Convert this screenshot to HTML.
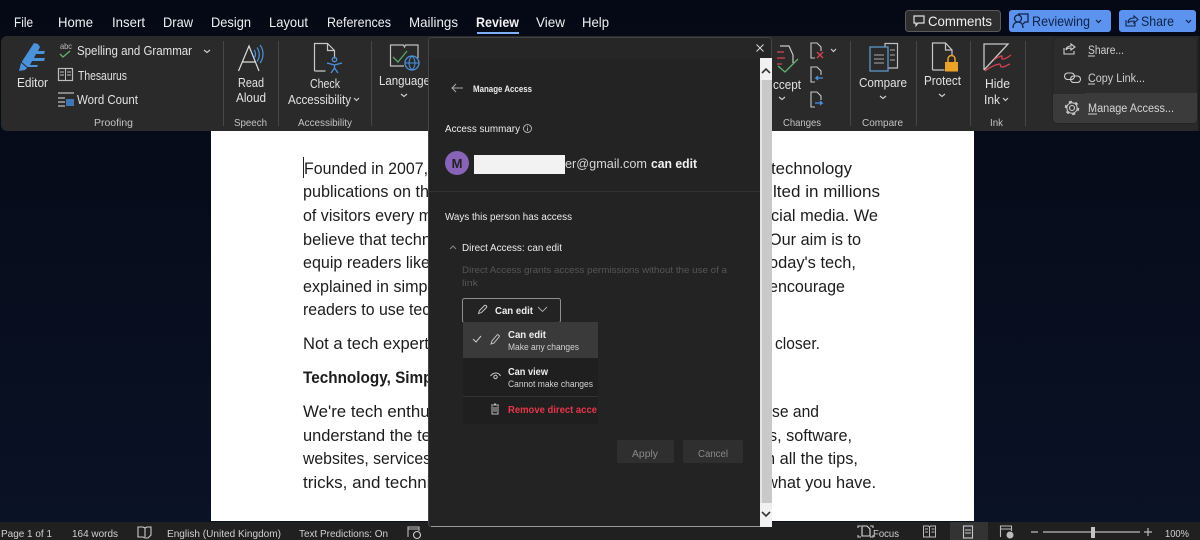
<!DOCTYPE html>
<html><head><meta charset="utf-8"><style>
html,body{margin:0;padding:0;background:#060b1a;width:1200px;height:540px;overflow:hidden}
svg{display:block;filter:blur(.3px)}
text{font-family:"Liberation Sans",sans-serif;white-space:pre}
.t{fill:#f0f0f0;font-size:14px}
.r{fill:#e2e2e2;font-size:12.5px}
.g{fill:#c4c4c4;font-size:10.5px}
.d{fill:#1c1c1c;font-size:17px}
.s{fill:#d0d0d0;font-size:10.5px}
.w{fill:#ededed;font-size:10px}
.b{font-weight:bold}
</style></head><body>
<svg width="1200" height="540" viewBox="0 0 1200 540" xmlns="http://www.w3.org/2000/svg">
<defs>
<clipPath id="cl"><rect x="211" y="131" width="218" height="390"/></clipPath>
<linearGradient id="bgg" x1="0" x2="0" y1="0" y2="1"><stop offset="0" stop-color="#050915"/><stop offset="1" stop-color="#0a1226"/></linearGradient>
</defs>
<rect width="1200" height="540" fill="url(#bgg)"/>

<!-- tabs -->
<g>
<text class="t" x="14" y="27" textLength="19" lengthAdjust="spacingAndGlyphs">File</text>
<text class="t" x="58" y="27" textLength="35" lengthAdjust="spacingAndGlyphs">Home</text>
<text class="t" x="112" y="27" textLength="33" lengthAdjust="spacingAndGlyphs">Insert</text>
<text class="t" x="163" y="27" textLength="30" lengthAdjust="spacingAndGlyphs">Draw</text>
<text class="t" x="211" y="27" textLength="40" lengthAdjust="spacingAndGlyphs">Design</text>
<text class="t" x="269" y="27" textLength="39" lengthAdjust="spacingAndGlyphs">Layout</text>
<text class="t" x="327" y="27" textLength="64" lengthAdjust="spacingAndGlyphs">References</text>
<text class="t" x="409" y="27" textLength="49" lengthAdjust="spacingAndGlyphs">Mailings</text>
<text class="t b" x="476" y="27" textLength="43" lengthAdjust="spacingAndGlyphs">Review</text>
<text class="t" x="536" y="27" textLength="29" lengthAdjust="spacingAndGlyphs">View</text>
<text class="t" x="582" y="27" textLength="27" lengthAdjust="spacingAndGlyphs">Help</text>
<rect x="477" y="32" width="42" height="2" fill="#7fb0f5"/>
</g>

<!-- top right buttons -->
<rect x="905.500" y="10.500" width="95" height="21" rx="3" fill="#2e2e2e" stroke="#5a5a5a"/>
<path d="M914 16h10v7h-6l-2 2.500v-2.500h-2z" fill="none" stroke="#e0e0e0" stroke-width="1.200"/>
<text x="928" y="26" fill="#eee" font-size="14" textLength="64" lengthAdjust="spacingAndGlyphs">Comments</text>
<rect x="1009" y="10" width="102" height="22" rx="3" fill="#5b93ee"/>
<path d="M1013 28c0-4 2-6 5-6s5 2 5 6M1018 22a3.500 3.500 0 1 0 0-7 3.500 3.500 0 0 0 0 7M1018 14h10v8h-3l-2 2" fill="none" stroke="#0f2347" stroke-width="1.300"/>
<text x="1032" y="26" fill="#0f2347" font-size="14" textLength="58" lengthAdjust="spacingAndGlyphs">Reviewing</text>
<path d="M1096 20l2.500 2.500 2.500-2.500" fill="none" stroke="#0f2347" stroke-width="1.200"/>
<rect x="1119" y="10" width="77" height="22" rx="3" fill="#5b93ee"/>
<path d="M1126 20v6h9v-3M1128 23c0-4 3-5 6-5v-2l4 3.500-4 3.500v-2c-2 0-4 0-6 2" fill="none" stroke="#0f2347" stroke-width="1.100"/>
<text x="1141" y="26" fill="#0f2347" font-size="14" textLength="33" lengthAdjust="spacingAndGlyphs">Share</text>
<path d="M1186 20l2.500 2.500 2.500-2.500" fill="none" stroke="#0f2347" stroke-width="1.200"/>

<!-- ribbon -->
<rect x="1" y="36" width="1205" height="95" rx="6" fill="#2a2a2a"/>
<g stroke="#474747" stroke-width="1">
<path d="M223.500 41v85M278.500 41v85M371.500 41v85M850.500 41v85M916.500 41v85M970.500 41v85M1025.500 41v85"/>
</g>

<!-- Editor -->
<path d="M19 71l2-8 13-20 4 1 2 3-2 4h7l-1 3H36l-2 4h11l-1 3H32l-2 4h8l-1 2H28l-3 3z" fill="#4a92dc"/>
<path d="M21 62l7 6" stroke="#2a2a2a" stroke-width="1"/>
<text class="r" x="17" y="87" textLength="31" lengthAdjust="spacingAndGlyphs">Editor</text>
<text x="60" y="49" fill="#bbb" font-size="8" textLength="12" lengthAdjust="spacingAndGlyphs">abc</text>
<path d="M60 54l3 3 7-6" fill="none" stroke="#5fb36c" stroke-width="1.300"/>
<text class="r" x="77" y="55" textLength="115" lengthAdjust="spacingAndGlyphs">Spelling and Grammar</text>
<path d="M204 50l3 2.500 3-2.500" fill="none" stroke="#ccc" stroke-width="1.200"/>
<rect x="58.500" y="68.500" width="14" height="12" fill="none" stroke="#bdbdbd" stroke-width="1.200"/>
<path d="M65.500 68.500v12M60 72h4M60 75h4M67 72h4M67 75h4" stroke="#bdbdbd"/>
<text class="r" x="78" y="80" textLength="49" lengthAdjust="spacingAndGlyphs">Thesaurus</text>
<path d="M58 93h16M58 98h7M58 102h7M58 106h7" stroke="#bdbdbd" stroke-width="1.200"/>
<rect x="66" y="99" width="8" height="7" fill="#3d77b5"/>
<text class="r" x="77" y="104" textLength="61" lengthAdjust="spacingAndGlyphs">Word Count</text>
<text class="g" x="94" y="126" textLength="39" lengthAdjust="spacingAndGlyphs">Proofing</text>

<!-- Read Aloud -->
<path d="M238.500 71L249 46l10 25M242 62h13.500" fill="none" stroke="#dcdcdc" stroke-width="1.200"/>
<path d="M254 50c2 2 2 6 0 8M257 47.500c3 4 3 10 0 14M260 45c4 5 4 13 0 18" fill="none" stroke="#4a92dc" stroke-width="1.200"/>
<text class="r" x="238" y="87" textLength="26" lengthAdjust="spacingAndGlyphs">Read</text>
<text class="r" x="236" y="102" textLength="30" lengthAdjust="spacingAndGlyphs">Aloud</text>
<text class="g" x="234" y="126" textLength="33" lengthAdjust="spacingAndGlyphs">Speech</text>

<!-- Check accessibility -->
<path d="M314.500 71V43.500h13l7 7v8M327.500 43.500v7h7M314.500 71h11" fill="none" stroke="#c8c8c8" stroke-width="1.200"/>
<circle cx="334.500" cy="59.500" r="2.200" fill="none" stroke="#4a92dc" stroke-width="1.300"/>
<path d="M327 63l7.500 2 7.500-2M334.500 65v3l-3.500 5M334.500 68l3.500 5" fill="none" stroke="#4a92dc" stroke-width="1.300"/>
<text class="r" x="310" y="88" textLength="30" lengthAdjust="spacingAndGlyphs">Check</text>
<text class="r" x="288" y="104" textLength="63" lengthAdjust="spacingAndGlyphs">Accessibility</text>
<path d="M354 98l2.500 2.500 2.500-2.500" fill="none" stroke="#ccc" stroke-width="1.200"/>
<text class="g" x="298" y="126" textLength="54" lengthAdjust="spacingAndGlyphs">Accessibility</text>

<!-- Language -->
<path d="M404 66h-13.500V45h13l1 2 1-2h12.500v13" fill="none" stroke="#c0c0c0" stroke-width="1.200"/>
<path d="M393 57l5 5 9-11" fill="none" stroke="#58a868" stroke-width="1.300"/>
<circle cx="412" cy="63" r="7" fill="#2a2a2a" stroke="#4a92dc" stroke-width="1.300"/>
<path d="M405 63h14M412 56c-4 4-4 10 0 14M412 56c4 4 4 10 0 14" fill="none" stroke="#4a92dc"/>
<text class="r" x="379" y="85" textLength="51" lengthAdjust="spacingAndGlyphs">Language</text>
<path d="M401 94l3 2.500 3-2.500" fill="none" stroke="#ccc" stroke-width="1.200"/>

<!-- Changes -->
<path d="M780 46h9l4 9v8" fill="none" stroke="#c8c8c8" stroke-width="1.200"/>
<path d="M777 52h7M777 58h8M777 64h5" stroke="#d34550" stroke-width="1.300"/>
<path d="M778 66l7 6 13-13" fill="none" stroke="#5fb36c" stroke-width="1.300"/>
<text class="r" x="773" y="89" textLength="28" lengthAdjust="spacingAndGlyphs">ccept</text>
<path d="M779 97l3 2.500 3-2.500" fill="none" stroke="#ccc" stroke-width="1.200"/>
<path d="M815 58h-4V43h6l4 4v4" fill="none" stroke="#c8c8c8" stroke-width="1.100"/>
<path d="M817 52l6 6M823 52l-6 6" stroke="#d34550" stroke-width="1.300"/>
<path d="M831 49l2.500 2.500 2.500-2.500" fill="none" stroke="#ccc" stroke-width="1.200"/>
<path d="M815 82h-4V67h6l4 4v4" fill="none" stroke="#c8c8c8" stroke-width="1.100"/>
<path d="M823 78h-7l2-2M816 78l2 2" fill="none" stroke="#4a92dc" stroke-width="1.300"/>
<path d="M815 107h-4V92h6l4 4v4" fill="none" stroke="#c8c8c8" stroke-width="1.100"/>
<path d="M815 103h7l-2-2M822 103l-2 2" fill="none" stroke="#4a92dc" stroke-width="1.300"/>
<text class="g" x="783" y="126" textLength="38" lengthAdjust="spacingAndGlyphs">Changes</text>

<!-- Compare -->
<path d="M885 47v-3.500h12.500V68H888" fill="none" stroke="#c0c0c0" stroke-width="1.200"/>
<rect x="870" y="47" width="18" height="24" fill="#2a2a2a" stroke="#5e96c8" stroke-width="1.300"/>
<path d="M874 55h10M874 59h10M874 63h10M890 50h5M890 55h5M890 60h5" stroke="#aaa"/>
<text class="r" x="859" y="87" textLength="48" lengthAdjust="spacingAndGlyphs">Compare</text>
<path d="M880 96l3 2.500 3-2.500" fill="none" stroke="#ccc" stroke-width="1.200"/>
<text class="g" x="862" y="126" textLength="41" lengthAdjust="spacingAndGlyphs">Compare</text>

<!-- Protect -->
<path d="M932.500 70V43h13l6.500 7v5M945.500 43v7h6.500M932.500 70h12" fill="none" stroke="#c8c8c8" stroke-width="1.200"/>
<rect x="945" y="62" width="13" height="9.500" fill="#eaa22b"/>
<path d="M948 62v-3a3.500 3.500 0 0 1 7 0v3" fill="none" stroke="#eaa22b" stroke-width="1.500"/>
<text class="r" x="924" y="85" textLength="37" lengthAdjust="spacingAndGlyphs">Protect</text>
<path d="M939 94l3 2.500 3-2.500" fill="none" stroke="#ccc" stroke-width="1.200"/>

<!-- Ink -->
<path d="M984 70V44h24l-24 26" fill="none" stroke="#c8c8c8" stroke-width="1.300"/>
<path d="M994 60c3-3 5-3 7-4 3-1-1 3 2 3s5-2 8-4" fill="none" stroke="#d8404e" stroke-width="1.300"/>
<path d="M985 71c5-4 10-6 14-7 3 0 0 3 3 3s5-2 8-3" fill="none" stroke="#d8404e" stroke-width="1.300"/>
<text class="r" x="985" y="88" textLength="25" lengthAdjust="spacingAndGlyphs">Hide</text>
<text class="r" x="984" y="104" textLength="16" lengthAdjust="spacingAndGlyphs">Ink</text>
<path d="M1003 98l2.500 2.500 2.500-2.500" fill="none" stroke="#ccc" stroke-width="1.200"/>
<text class="g" x="990" y="126" textLength="13" lengthAdjust="spacingAndGlyphs">Ink</text>

<!-- Share dropdown -->
<rect x="1198" y="36" width="2" height="95" fill="#1c1c1c"/>
<rect x="1053" y="37" width="144" height="86" rx="4" fill="#2c2c2c" stroke="#232323"/>
<path d="M1085 93h112v1h-112z" fill="#3a3a3a"/>
<path d="M1053 94h144v25a4 4 0 0 1-4 4h-136a4 4 0 0 1-4-4z" fill="#3b3b3b"/>
<path d="M1064 48v6h10v-3M1066 50c0-3 3-4 5-4v-2l4 3-4 3v-2c-2 0-4 0-5 2" fill="none" stroke="#d0d0d0" stroke-width="1.100"/>
<text x="1088" y="54" fill="#cfcfcf" font-size="11.500" textLength="36" lengthAdjust="spacingAndGlyphs">Share...</text>
<path d="M1088 56h7" stroke="#cfcfcf"/>
<rect x="1064.500" y="73" width="10" height="6.500" rx="3.200" fill="none" stroke="#d0d0d0" stroke-width="1.100"/>
<rect x="1070.500" y="76" width="10" height="6.500" rx="3.200" fill="none" stroke="#d0d0d0" stroke-width="1.100"/>
<text x="1088" y="82" fill="#cfcfcf" font-size="11.500" textLength="57" lengthAdjust="spacingAndGlyphs">Copy Link...</text>
<path d="M1088 84h7" stroke="#cfcfcf"/>
<circle cx="1072" cy="108" r="2.500" fill="none" stroke="#d0d0d0" stroke-width="1.100"/>
<circle cx="1072" cy="108" r="5.200" fill="none" stroke="#d0d0d0" stroke-width="1"/>
<circle cx="1072" cy="108" r="6.500" fill="none" stroke="#d0d0d0" stroke-width="1.500" stroke-dasharray="3 3.800"/>
<text x="1088" y="112" fill="#d6d6d6" font-size="11.500" textLength="86" lengthAdjust="spacingAndGlyphs">Manage Access...</text>
<path d="M1088 114h9" stroke="#cfcfcf"/>

<!-- document -->
<rect x="211" y="131" width="763" height="390" fill="#fff"/>
<rect x="303" y="157" width="1" height="21" fill="#222"/>
<g clip-path="url(#cl)">
<text class="d" x="304" y="174" textLength="124" lengthAdjust="spacingAndGlyphs">Founded in 2007,</text>
<text class="d" x="303" y="197" textLength="135" lengthAdjust="spacingAndGlyphs">publications on the</text>
<text class="d" x="303" y="221" textLength="138" lengthAdjust="spacingAndGlyphs">of visitors every mo</text>
<text class="d" x="303" y="245" textLength="137" lengthAdjust="spacingAndGlyphs">believe that techno</text>
<text class="d" x="303" y="268" textLength="127" lengthAdjust="spacingAndGlyphs">equip readers like</text>
<text class="d" x="303" y="292" textLength="137" lengthAdjust="spacingAndGlyphs">explained in simple</text>
<text class="d" x="303" y="315" textLength="136" lengthAdjust="spacingAndGlyphs">readers to use tech</text>
<text class="d" x="303" y="349" textLength="126" lengthAdjust="spacingAndGlyphs">Not a tech expert</text>
<text class="d b" x="303" y="383" textLength="138" lengthAdjust="spacingAndGlyphs">Technology, Simpli</text>
<text class="d" x="303" y="417" textLength="135" lengthAdjust="spacingAndGlyphs">We're tech enthus</text>
<text class="d" x="303" y="441" textLength="136" lengthAdjust="spacingAndGlyphs">understand the tec</text>
<text class="d" x="303" y="464" textLength="128" lengthAdjust="spacingAndGlyphs">websites, services</text>
<text class="d" x="303" y="488" textLength="136" lengthAdjust="spacingAndGlyphs">tricks, and technic</text>
</g>
<text class="d" x="771" y="174" textLength="81" lengthAdjust="spacingAndGlyphs">technology</text>
<text class="d" x="773" y="197" textLength="107" lengthAdjust="spacingAndGlyphs">lted in millions</text>
<text class="d" x="771" y="221" textLength="107" lengthAdjust="spacingAndGlyphs">cial media. We</text>
<text class="d" x="769" y="245" textLength="92" lengthAdjust="spacingAndGlyphs">Our aim is to</text>
<text class="d" x="769" y="268" textLength="87" lengthAdjust="spacingAndGlyphs">oday's tech,</text>
<text class="d" x="769" y="292" textLength="76" lengthAdjust="spacingAndGlyphs">encourage</text>
<text class="d" x="775" y="349" textLength="45" lengthAdjust="spacingAndGlyphs">closer.</text>
<text class="d" x="772" y="417" textLength="47" lengthAdjust="spacingAndGlyphs">se and</text>
<text class="d" x="769" y="441" textLength="83" lengthAdjust="spacingAndGlyphs">s, software,</text>
<text class="d" x="766" y="464" textLength="92" lengthAdjust="spacingAndGlyphs">n all the tips,</text>
<text class="d" x="766" y="488" textLength="110" lengthAdjust="spacingAndGlyphs">what you have.</text>

<!-- status bar -->
<rect x="0" y="522" width="1200" height="18" fill="#202020"/>
<rect x="950" y="522" width="38" height="18" fill="#333"/>
<text class="s" x="1" y="537" textLength="51" lengthAdjust="spacingAndGlyphs">Page 1 of 1</text>
<text class="s" x="72" y="537" textLength="46" lengthAdjust="spacingAndGlyphs">164 words</text>
<path d="M138 527h5l2 1 2-1h4v8l-3 3h-3l-2-1-5 0z M145 528v9" fill="none" stroke="#ccc" stroke-width="1.100"/>
<text class="s" x="167" y="537" textLength="114" lengthAdjust="spacingAndGlyphs">English (United Kingdom)</text>
<text class="s" x="299" y="537" textLength="89" lengthAdjust="spacingAndGlyphs">Text Predictions: On</text>
<path d="M408 537v-10h11v4M408 529h11" fill="none" stroke="#bbb" stroke-width="1.100"/>
<circle cx="417" cy="535" r="3.500" fill="none" stroke="#ccc" stroke-width="1.100"/>
<path d="M858 528v-2h3M870 526h3v2M858 535v2h3M870 537h3v-2" fill="none" stroke="#ccc" stroke-width="1.100"/>
<path d="M862 536v-10h5l3 3v7z" fill="none" stroke="#ddd" stroke-width="1.100"/>
<text class="s" x="873" y="537" textLength="26" lengthAdjust="spacingAndGlyphs">Focus</text>
<path d="M923.500 526h5l1 1 1-1h5v11h-12zM929.500 527v10M925 529h3M925 532h3M931.500 529h3M931.500 532h3" fill="none" stroke="#bbb" stroke-width="1"/>
<rect x="963.500" y="526" width="9" height="12" fill="none" stroke="#c8c8c8" stroke-width="1.100"/>
<path d="M965 530h6M965 533h6" stroke="#c8c8c8"/>
<path d="M1000.500 537v-11h11v5M1000.500 529h11" fill="none" stroke="#bbb" stroke-width="1.100"/>
<circle cx="1010" cy="535" r="3.500" fill="#bbb"/>
<path d="M1031 532h7M1043 532h97M1144 532h8M1148 528v8" stroke="#bbb" stroke-width="1.200"/>
<rect x="1091" y="527" width="4" height="11" fill="#c4c4c4"/>
<text class="s" x="1165" y="537" textLength="24" lengthAdjust="spacingAndGlyphs">100%</text>

<!-- dialog -->
<rect x="428.500" y="37.500" width="343" height="489" rx="3" fill="#232323" stroke="#444"/>
<rect x="429" y="38" width="342" height="20" rx="2" fill="#262626"/>
<path d="M431 526.500h330" stroke="#9a9a9a"/>
<path d="M756.500 44.500l7 7M763.500 44.500l-7 7" stroke="#d8d8d8" stroke-width="1"/>
<rect x="760" y="58" width="12" height="469" fill="#c9c9c9"/>
<rect x="760" y="58" width="2" height="469" fill="#e4e4e4"/>
<rect x="760" y="58" width="12" height="22" fill="#f1f1f1"/>
<rect x="760" y="503" width="12" height="24" fill="#f1f1f1"/>
<path d="M762 73l4-4 4 4" fill="none" stroke="#333" stroke-width="1.600"/>
<path d="M762 512l4 4 4-4" fill="none" stroke="#333" stroke-width="1.600"/>

<path d="M463 88h-10.500M456 84l-4 4 4 4" fill="none" stroke="#aaa" stroke-width="1"/>
<text x="473" y="92" fill="#ededed" font-size="9" font-weight="bold" textLength="59" lengthAdjust="spacingAndGlyphs">Manage Access</text>
<text class="w" x="445" y="132" textLength="75" lengthAdjust="spacingAndGlyphs">Access summary</text>
<circle cx="527.500" cy="128.500" r="4" fill="none" stroke="#ccc" stroke-width=".8"/>
<path d="M527.500 127.500v3.500M527.500 125.800v1" stroke="#ccc" stroke-width=".8"/>
<circle cx="457" cy="163" r="12" fill="#8764b8"/>
<text x="457" y="168" fill="#222" font-size="13" font-weight="bold" text-anchor="middle">M</text>
<rect x="474" y="155" width="91" height="19" fill="#f2f2f2"/>
<text x="565" y="168" fill="#d6d6d6" font-size="13" textLength="82" lengthAdjust="spacingAndGlyphs">er@gmail.com</text>
<text x="651" y="168" fill="#f0f0f0" font-size="13" font-weight="bold" textLength="46" lengthAdjust="spacingAndGlyphs">can edit</text>
<rect x="429" y="191" width="331" height="1" fill="#333"/>
<text class="w" x="445" y="220" textLength="127" lengthAdjust="spacingAndGlyphs">Ways this person has access</text>
<path d="M450 249l3-3 3 3" fill="none" stroke="#888" stroke-width="1"/>
<text class="w" x="462" y="251" textLength="100" lengthAdjust="spacingAndGlyphs">Direct Access: can edit</text>
<text x="462" y="273" fill="#555" font-size="9.500" textLength="265" lengthAdjust="spacingAndGlyphs">Direct Access grants access permissions without the use of a</text>
<text x="462" y="286" fill="#555" font-size="9.500" textLength="16" lengthAdjust="spacingAndGlyphs">link</text>

<rect x="462.500" y="298.500" width="98" height="24" rx="2" fill="#232323" stroke="#8f8f8f"/>
<path d="M478.500 313.500l1-3 5-5c1-1 3 1 2 2l-5 5z" fill="none" stroke="#d0d0d0" stroke-width=".9"/>
<text x="495" y="314" fill="#eee" font-size="10" font-weight="bold" textLength="38" lengthAdjust="spacingAndGlyphs">Can edit</text>
<path d="M538 307l4.500 4.500 4.500-4.500" fill="none" stroke="#aaa" stroke-width=".9"/>

<rect x="463" y="322" width="135" height="102" fill="#1f1f1f"/>
<rect x="463" y="322" width="135" height="36" fill="#3a3a3a"/>
<path d="M473 339l3 3 5-6" fill="none" stroke="#ccc" stroke-width="1"/>
<path d="M491 344l1-3 5-6c1-1 3 1 2 2l-5 6z" fill="none" stroke="#d0d0d0" stroke-width=".9"/>
<text x="508" y="338" fill="#eee" font-size="10" font-weight="bold" textLength="38" lengthAdjust="spacingAndGlyphs">Can edit</text>
<text x="508" y="350" fill="#d0d0d0" font-size="9" textLength="71" lengthAdjust="spacingAndGlyphs">Make any changes</text>
<path d="M490.500 376c3-4 8-4 10 0" fill="none" stroke="#ccc" stroke-width="1"/>
<circle cx="495.500" cy="377" r="1.700" fill="none" stroke="#ccc" stroke-width="1"/>
<text x="508" y="375" fill="#eee" font-size="10" font-weight="bold" textLength="40" lengthAdjust="spacingAndGlyphs">Can view</text>
<text x="508" y="387" fill="#d0d0d0" font-size="9" textLength="85" lengthAdjust="spacingAndGlyphs">Cannot make changes</text>
<rect x="463" y="396" width="135" height="1" fill="#333"/>
<path d="M491 405h8M492 406v8h6v-8M494 404h2M494 407v5M496 407v5" fill="none" stroke="#bcbcbc" stroke-width="1"/>
<text x="508" y="413" fill="#e8354a" font-size="10" font-weight="bold" textLength="89" lengthAdjust="spacingAndGlyphs">Remove direct acce</text>

<rect x="617" y="440" width="57" height="23" rx="2" fill="#2f2f2f"/>
<text x="632" y="457" fill="#8a8a8a" font-size="10.500" textLength="26" lengthAdjust="spacingAndGlyphs">Apply</text>
<rect x="683" y="440" width="60" height="23" rx="2" fill="#2f2f2f"/>
<text x="698" y="457" fill="#8a8a8a" font-size="10.500" textLength="30" lengthAdjust="spacingAndGlyphs">Cancel</text>
</svg>
</body></html>
